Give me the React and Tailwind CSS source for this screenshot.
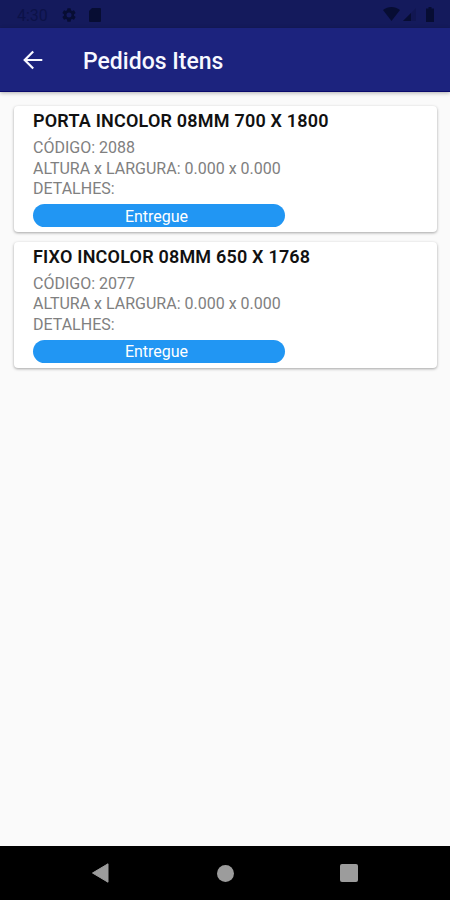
const ITEMS = [
  { title: 'PORTA INCOLOR 08MM 700 X 1800', code: '2088', size: '0.000 x 0.000', details: '', status: 'Entregue' },
  { title: 'FIXO INCOLOR 08MM 650 X 1768', code: '2077', size: '0.000 x 0.000', details: '', status: 'Entregue' },
]

function StatusBar() {
  return (
    <div className="flex h-7 items-center justify-between bg-[#141a5c] pl-[17px] pr-4 text-[#070d33]">
      <div className="flex items-center pt-px">
        <span className="w-[45px] pt-0.5 text-[16px] leading-none text-[#0c1248]">4:30</span>
        <svg width="14" height="14" viewBox="2 2 20 20" fill="currentColor">
          <path d="M19.14 12.94c.04-.3.06-.61.06-.94 0-.32-.02-.64-.07-.94l2.03-1.58a.49.49 0 0 0 .12-.61l-1.92-3.32a.49.49 0 0 0-.59-.22l-2.39.96a7 7 0 0 0-1.62-.94l-.36-2.54A.48.48 0 0 0 13.92 2.4h-3.84a.48.48 0 0 0-.48.41l-.36 2.54c-.59.24-1.13.57-1.62.94l-2.39-.96a.48.48 0 0 0-.59.22L2.72 8.87a.47.47 0 0 0 .12.61l2.03 1.58c-.05.3-.07.62-.07.94s.02.64.07.94l-2.03 1.58a.49.49 0 0 0-.12.61l1.92 3.32c.12.22.37.29.59.22l2.39-.96c.5.38 1.03.7 1.62.94l.36 2.54c.05.24.24.41.48.41h3.84c.24 0 .44-.17.48-.41l.36-2.54a7 7 0 0 0 1.62-.94l2.39.96c.22.08.47 0 .59-.22l1.92-3.32a.49.49 0 0 0-.12-.61zM12 15.6a3.6 3.6 0 1 1 0-7.2 3.6 3.6 0 0 1 0 7.2z" />
        </svg>
        <svg className="ml-[13px]" width="12" height="14" viewBox="0 0 12 14" fill="currentColor">
          <path d="M3 0h8a1 1 0 0 1 1 1v12a1 1 0 0 1-1 1H1a1 1 0 0 1-1-1V3z" />
        </svg>
      </div>
      <div className="flex items-center">
        <svg width="17" height="14" viewBox="0 0 17 14" fill="currentColor">
          <path d="M0 3C5-1 12-1 17 3L8.5 14z" />
        </svg>
        <svg className="ml-[3px]" width="13" height="13" viewBox="0 0 13 13" fill="currentColor">
          <path d="M0 13L13 0v13z" opacity=".25" />
          <path d="M0 13l8-8v8z" />
        </svg>
        <svg className="ml-2.5" width="8" height="15" viewBox="0 0 8 15" fill="currentColor">
          <path d="M2.5 0h3v1.5H8V15H0V1.5h2.5z" />
        </svg>
      </div>
    </div>
  )
}

function AppBar() {
  return (
    <header className="flex h-16 items-center border-b border-[#0a0a6c] bg-[#1c237e] pl-[23px] text-[#f7f8ff] shadow-[0_1px_4px_rgba(0,0,0,0.3)]">
      <svg className="mt-px" width="20" height="20" viewBox="0 0 20 20" fill="none" stroke="currentColor" strokeWidth="2.2">
        <path d="M19.3 10H2M10.2 1.5L1.7 10l8.5 8.5" />
      </svg>
      <h1 className="ml-10 pt-[3px] text-[23px] font-medium leading-none">Pedidos Itens</h1>
    </header>
  )
}

function ItemCard({ item }) {
  return (
    <article className="h-[126px] rounded-[4px] bg-white pl-[19px] pt-[4px] shadow-[0_1px_3px_rgba(0,0,0,0.35)]">
      <h2 className="text-[18px] font-semibold leading-[22px] tracking-[0.2px] text-[#111]">{item.title}</h2>
      <div className="mt-[6px] text-[16px] leading-[20.5px] text-[#808080]">
        <p>CÓDIGO: {item.code}</p>
        <p>ALTURA x LARGURA: {item.size}</p>
        <p>DETALHES: {item.details}</p>
      </div>
      <div className="mt-[4.5px] flex h-[23px] w-[252px] items-center justify-center rounded-full bg-[#2196f3] pr-[5px] pt-[2px] text-[16px] leading-none text-white">
        {item.status}
      </div>
    </article>
  )
}

function NavBar() {
  return (
    <nav className="flex h-[54px] items-center bg-black pl-[92px] text-[#9c9c9c]">
      <svg width="17" height="20" viewBox="0 0 17 20" fill="currentColor">
        <path d="M16 .8v18.4L.5 10z" stroke="currentColor" strokeLinejoin="round" />
      </svg>
      <div className="ml-[108px] size-[17px] rounded-full bg-current" />
      <div className="ml-[106px] size-[18px] rounded-[2px] bg-current" />
    </nav>
  )
}

export default function App() {
  return (
    <div className="flex h-[900px] w-[450px] flex-col overflow-hidden bg-[#fafafa] font-['Roboto',sans-serif]">
      <StatusBar />
      <AppBar />
      <main className="flex flex-1 flex-col gap-[9.5px] pl-3.5 pr-[13px] pt-3.5">
        {ITEMS.map((item) => (
          <ItemCard key={item.code} item={item} />
        ))}
      </main>
      <NavBar />
    </div>
  )
}
